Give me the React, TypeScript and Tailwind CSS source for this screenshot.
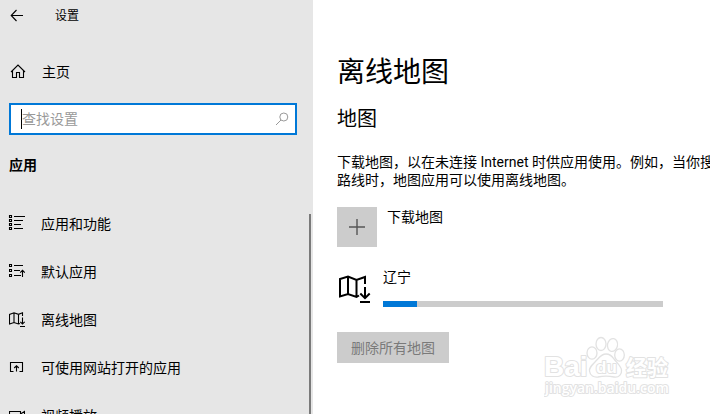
import type { ReactNode } from 'react';

function BackIcon() {
	return (
		<svg width="14" height="14" viewBox="0 0 14 14" fill="none" stroke="#000" strokeWidth="1.1">
			<path d="M13 6.5H1.5M6.5 1L1.2 6.5L6.5 12" />
		</svg>
	);
}

function HomeIcon() {
	return (
		<svg width="16" height="16" viewBox="0 0 16 16" fill="none" stroke="#000" strokeWidth="1.1">
			<path d="M1 8L8 1L15 8M2.5 7V13.5H6.5V8.5H9.5V13.5H13.5V7" />
		</svg>
	);
}

function SearchIcon() {
	return (
		<svg width="14" height="14" viewBox="0 0 14 14" fill="none" stroke="#999" strokeWidth="1">
			<circle cx="8.8" cy="5" r="4" />
			<path d="M6 8L1 13" />
		</svg>
	);
}

function AppsIcon() {
	return (
		<svg
			width="16"
			height="16"
			viewBox="0 0 16 16"
			fill="none"
			stroke="#000"
			strokeWidth="1.1"
			className="overflow-visible"
		>
			<path d="M0.5 -0.5h2v2h-2zM0.5 3.5h2v2h-2zM0.5 7.5h2v2h-2zM0.5 11.5h2v2h-2z" />
			<path d="M5 0.5H16M5 4.5H14M5 8.5H12M5 12.5H14" />
		</svg>
	);
}

function DefaultAppsIcon() {
	return (
		<svg width="16" height="16" viewBox="0 0 16 16" fill="none" stroke="#000" strokeWidth="1.1">
			<path d="M0.5 0.5h2v2h-2zM0.5 5.5h2v2h-2zM0.5 10.5h2v2h-2z" />
			<path d="M5 1.5H14M5 6.5H11M5 11.5H12M13.5 13V6.5M11.2 8.7L13.5 6.4L15.8 8.7" />
		</svg>
	);
}

function MapIcon() {
	return (
		<svg width="16" height="16" viewBox="0 0 16 16" fill="none" stroke="#000" strokeWidth="1.1">
			<path d="M11 11.5L9.5 12L5 10.5L0.5 12V2.5L5 0.8L9.5 2.3L13.5 0.8V4M5 0.8V10.5M9.5 2.3V12" />
			<path d="M13.5 5.5V12M11.3 9.8L13.5 12L15.8 9.8M11 14.5H16" />
		</svg>
	);
}

function OpenIcon() {
	return (
		<svg width="16" height="16" viewBox="0 0 16 16" fill="none" stroke="#000" strokeWidth="1.1">
			<path d="M4.5 11.5H1.5V2.5H13.5V11.5H10.5M7.5 11.5V5.8M5.2 8L7.5 5.7L9.8 8" />
		</svg>
	);
}

function VideoIcon() {
	return (
		<svg width="16" height="16" viewBox="0 0 16 16" fill="none" stroke="#000" strokeWidth="1.1">
			<path d="M0.5 3.5H11.5V12.5H0.5zM11.5 6L15.5 3.5V12.5L11.5 10" />
		</svg>
	);
}

function MapDownloadIcon() {
	return (
		<svg
			width="34"
			height="30"
			viewBox="0 0 34 30"
			fill="none"
			stroke="#000"
			strokeWidth="2"
			className="shrink-0"
		>
			<path d="M22 20.5L19.5 22L11 19L3 21.5V4L11 1.5L19.5 5L28 2V9M11 1.5V19M19.5 5V22" />
			<path d="M28 12V23M23.3 18.5L28 23.2L32.7 18.5M23 27H33" />
		</svg>
	);
}

function Watermark() {
	return (
		<svg
			width="130"
			height="64"
			viewBox="0 0 130 64"
			fill="#fff"
			stroke="#e2e2e2"
			strokeWidth="2"
			strokeLinejoin="round"
			className="absolute right-9 bottom-3.5"
			aria-hidden="true"
		>
			<g strokeWidth="1.3">
				<ellipse cx="48" cy="17" rx="5" ry="6.2" />
				<ellipse cx="57" cy="8" rx="5" ry="6.5" />
				<ellipse cx="68.5" cy="9" rx="5" ry="6.5" transform="rotate(12 68.5 9)" />
				<ellipse cx="75.5" cy="19" rx="4.8" ry="6.2" />
				<path d="M62 18C57 18 55 22 51 26C47 30 45 32 45.5 35C46 40 50 41.5 54 41C59 40 65 40 70 41C75 42 78 38 77.5 34C77 30 73 27 70 23C68 20 66 18 62 18Z" />
			</g>
			<g className="font-['Liberation_Sans'] font-bold [paint-order:stroke]">
				<text x="0" y="40" fontSize="28">Bai</text>
				<text x="52" y="37" fontSize="17">du</text>
			</g>
			<text
				x="82"
				y="39"
				fontSize="21"
				className="font-['Noto_Sans_CJK_SC'] font-bold [paint-order:stroke]"
			>
				经验
			</text>
			<text
				x="1"
				y="57"
				fontSize="14"
				className="font-['Open_Sans'] font-semibold [paint-order:stroke]"
			>
				jingyan.baidu.com
			</text>
		</svg>
	);
}

const navItems: { label: string; icon: ReactNode }[] = [
	{ label: '应用和功能', icon: <AppsIcon /> },
	{ label: '默认应用', icon: <DefaultAppsIcon /> },
	{ label: '离线地图', icon: <MapIcon /> },
	{ label: '可使用网站打开的应用', icon: <OpenIcon /> },
	{ label: '视频播放', icon: <VideoIcon /> },
];

function Sidebar() {
	return (
		<aside className="flex w-[313px] shrink-0 flex-col bg-[#e6e6e6]">
			<header className="flex h-8 items-center gap-[31px] pl-2.5">
				<button type="button" aria-label="返回">
					<BackIcon />
				</button>
				<span className="text-xs">设置</span>
			</header>

			<a href="#home" className="mt-4 flex h-12 items-center gap-4 pl-2.5">
				<HomeIcon />
				主页
			</a>

			<label className="mt-[7px] mr-4 ml-[9px] flex h-8 shrink-0 items-center border-2 border-[#0078d7] bg-white pr-1.5 pl-2.5">
				<span className="h-5 w-px bg-black" />
				<input
					type="text"
					aria-label="查找设置"
					placeholder="查找设置"
					className="min-w-0 flex-1 bg-transparent outline-none placeholder:text-[#999]"
				/>
				<SearchIcon />
			</label>

			<h2 className="mt-[18px] pl-[9px] leading-6 font-bold">应用</h2>

			<div className="mt-[23px] flex min-h-0 flex-1 justify-between overflow-hidden pr-0.5">
				<nav>
					{navItems.map(item => (
						<a
							key={item.label}
							href={`#${item.label}`}
							className="flex h-12 items-center gap-4 pl-[9px]"
						>
							{item.icon}
							{item.label}
						</a>
					))}
				</nav>
				<div className="mt-3.5 w-0.5 bg-[#7a7a7a]" />
			</div>
		</aside>
	);
}

export default function App() {
	return (
		<div className="relative flex h-screen overflow-hidden bg-white font-[Roboto,'Noto_Sans_CJK_SC',sans-serif] text-sm text-black">
			<Sidebar />

			<main className="min-w-0 flex-1 overflow-hidden pt-[53px] pl-6">
				<h1 className="text-[28px] leading-10">离线地图</h1>
				<h2 className="mt-3 text-xl leading-7">地图</h2>
				<p className="mt-5 leading-[18px] whitespace-nowrap">
					下载地图，以在未连接 Internet 时供应用使用。例如，当你搜
					<br />
					路线时，地图应用可以使用离线地图。
				</p>

				<button type="button" className="mt-[18px] flex gap-2.5 text-left">
					<span className="flex size-10 items-center justify-center bg-[#ccc]">
						<svg width="16" height="16" viewBox="0 0 16 16" stroke="#555" strokeWidth="1.4">
							<path d="M0 8H16M8 0V16" />
						</svg>
					</span>
					下载地图
				</button>

				<div className="mt-5 flex gap-3">
					<div className="pt-2">
						<MapDownloadIcon />
					</div>
					<div>
						<div id="region">辽宁</div>
						<div
							role="progressbar"
							aria-labelledby="region"
							aria-valuenow={12}
							className="mt-3.5 h-1.5 w-[280px] bg-[#ccc]"
						>
							<div className="h-full w-[12%] bg-[#0078d7]" />
						</div>
					</div>
				</div>

				<button type="button" disabled className="mt-[25px] h-[31px] bg-[#ccc] px-3.5 text-[#7a7a7a]">
					删除所有地图
				</button>
			</main>

			<Watermark />
		</div>
	);
}
